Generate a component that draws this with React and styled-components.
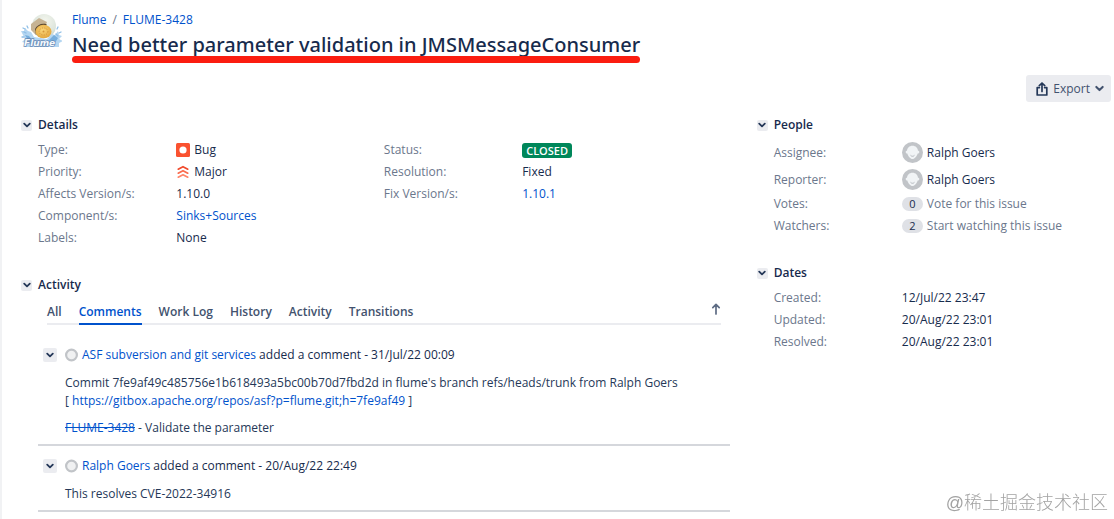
import React, { useState } from 'react';
import styled, { createGlobalStyle } from 'styled-components';

const GlobalStyle = createGlobalStyle`
  * {
    box-sizing: border-box;
  }

  body {
    margin: 0;
    background: #fff;
    color: #172b4d;
    font-family: 'Open Sans', 'Noto Sans', 'Noto Sans CJK SC', sans-serif;
    font-size: 12px;
    line-height: 18px;
  }

  button {
    font: inherit;
    cursor: pointer;
  }
`;

const Page = styled.div`
  min-height: 100vh;
  padding: 11px 3px 5px 19px;
  border-left: 2px solid #f1f2f4;
`;

const Header = styled.header`
  display: flex;
  gap: 10px;
`;

const Logo = styled.svg`
  width: 41px;
  height: 36px;
  margin-top: 2px;
`;

const Breadcrumbs = styled.nav`
  display: flex;
  gap: 6px;
  color: #6b778c;
`;

const Link = styled.a`
  color: #0052cc;
  text-decoration: ${(props) => (props.$resolved ? 'line-through' : 'none')};
`;

const Title = styled.h1`
  position: relative;
  width: fit-content;
  margin: 3px 0 0;
  font-family: 'Noto Sans', 'Open Sans', sans-serif;
  font-size: 20px;
  font-weight: 500;
  line-height: 26px;

  &::after {
    content: '';
    position: absolute;
    left: 0;
    right: 0;
    bottom: -5px;
    height: 7px;
    border-radius: 4px;
    background: #fb1d10;
  }
`;

const Toolbar = styled.div`
  display: flex;
  justify-content: flex-end;
  margin-top: 17px;
`;

const ExportButton = styled.button`
  display: flex;
  align-items: center;
  gap: 5px;
  height: 27px;
  padding: 0 7px 0 10px;
  border: 0;
  border-radius: 3px;
  background: #ebecf0;
  color: #42526e;
`;

const Columns = styled.div`
  display: grid;
  grid-template-columns: 2fr 1fr;
  gap: 27px;
  margin-top: 14px;
`;

const Module = styled.section`
  & + & {
    margin-top: 27px;
  }
`;

const ModuleHeader = styled.div`
  display: flex;
  align-items: center;
  gap: 6px;
`;

const ModuleTitle = styled.h2`
  margin: 0;
  font-size: 12px;
  font-weight: 600;
  line-height: 18px;
`;

const ModuleBody = styled.div`
  margin-left: 17px;
  padding-top: 5px;
`;

const Toggle = styled.button`
  display: flex;
  align-items: center;
  justify-content: center;
  width: ${(props) => props.$size}px;
  height: ${(props) => props.$size}px;
  padding: 0;
  border: 0;
  border-radius: 2px;
  background: #ebecf0;
  color: #253858;
`;

const TwoColumns = styled.div`
  display: grid;
  grid-template-columns: 1fr 1fr;
`;

const Fields = styled.dl`
  margin: 0;
`;

const Field = styled.div`
  display: grid;
  grid-template-columns: ${(props) => props.$label || '40%'} 1fr;
  align-items: center;
  height: ${(props) => (props.$tall ? 27 : 22)}px;
`;

const Label = styled.dt`
  color: #6b778c;
`;

const Value = styled.dd`
  display: flex;
  align-items: center;
  gap: 4px;
  margin: 0;
`;

const Status = styled.span`
  padding: 0 4px;
  border-radius: 3px;
  background: #00875a;
  color: #fff;
  font-size: 11px;
  font-weight: 600;
  line-height: 15px;
`;

const Badge = styled.span`
  min-width: 21px;
  border-radius: 8px;
  background: #dfe1e6;
  font-size: 11px;
  line-height: 14px;
  text-align: center;
`;

const ActionButton = styled.button`
  padding: 0;
  border: 0;
  background: none;
  color: #6b778c;
`;

const TabBar = styled.div`
  display: flex;
  justify-content: space-between;
  margin: 4px 9px 10px;
  border-bottom: 2px solid #ebecf0;
`;

const TabList = styled.div`
  display: flex;
  gap: 17px;
`;

const Tab = styled.button`
  margin-bottom: -2px;
  padding: 0 0 2px;
  border: 0;
  border-bottom: 2px solid ${(props) => (props.$active ? '#0052cc' : 'transparent')};
  background: none;
  color: ${(props) => (props.$active ? '#0052cc' : '#42526e')};
  font-weight: 600;
`;

const SortButton = styled.button`
  display: flex;
  width: 10px;
  padding: 0;
  border: 0;
  background: none;
  color: #5e6c84;
`;

const Comment = styled.article`
  padding: 11px 0 7px 5px;
  border-bottom: 2px solid #d5d7dc;
`;

const CommentHeader = styled.div`
  display: flex;
  align-items: center;
  gap: 8px;
`;

const Author = styled.div`
  display: flex;
  align-items: center;
  gap: 4px;
`;

const CommentBody = styled.div`
  padding: 1px 0 0 22px;
  color: #253858;

  p {
    margin: 9px 0 0;
  }
`;

const Watermark = styled.div`
  position: fixed;
  right: 6px;
  bottom: 4px;
  color: #a3a3a3;
  font-family: 'Liberation Sans', 'Noto Sans CJK SC', sans-serif;
  font-size: 18px;
  font-weight: 300;
  line-height: 24px;
`;

function Chevron({ size = 8 }) {
  return (
    <svg width={size} height={size} viewBox="0 0 8 8" fill="none" stroke="currentColor" strokeWidth="1.8" strokeLinecap="round" strokeLinejoin="round">
      <path d="M1.2 2.6 4 5.4l2.8-2.8" />
    </svg>
  );
}

function FlumeLogo() {
  return (
    <Logo viewBox="0 0 41 36" aria-hidden="true">
      <defs>
        <radialGradient id="globe" cx="0.55" cy="0.3" r="0.7">
          <stop offset="0" stopColor="#f4f6ee" />
          <stop offset="0.7" stopColor="#dde5dc" />
          <stop offset="1" stopColor="#bfd0cb" />
        </radialGradient>
        <radialGradient id="wheel" cx="0.45" cy="0.4" r="0.6">
          <stop offset="0" stopColor="#fbd77a" />
          <stop offset="1" stopColor="#e3a63c" />
        </radialGradient>
      </defs>
      <circle cx="23" cy="13" r="12" fill="url(#globe)" />
      <path d="M0 18l3 0 1-3 3 3 3 1 3 5 13 2 5-5 3 1 3-4 1 4 3 1-3 3 4 2-4 2 0 4H4l1-4-4-1 3-3z" fill="#b4d6f1" />
      <path d="M4 22l4 1 4 5 8 2 8-3 5-5 4 3-3 5-10 2H10z" fill="#76aedd" />
      <path d="M2 15l2 1M6 13l1 2M3 19l2 1M36 16l1-2M38 20l2-1M1 24h2M35 21l2 2" stroke="#8fbfe6" strokeWidth="1.3" strokeLinecap="round" />
      <path d="M10 11l8-6 8 4-2 5-8 4-1 4-5-5z" fill="#c6b394" />
      <path d="M14 16c2-4 6-6 11-5l1 1-6 3-5 7z" fill="#5d4a31" />
      <ellipse cx="22.5" cy="18.5" rx="8" ry="6.8" fill="url(#wheel)" />
      <ellipse cx="22.5" cy="18.5" rx="4.4" ry="3.6" fill="none" stroke="#d5953a" strokeDasharray="1.2 1.2" />
      <circle cx="22.5" cy="18.5" r="1" fill="#d5953a" />
      <text x="3" y="33" fill="#f4f8fc" stroke="#6688b3" strokeWidth="1.3" paintOrder="stroke" fontFamily="DejaVu Sans, sans-serif" fontSize="9" fontWeight="700" fontStyle="italic">
        Flume
      </text>
    </Logo>
  );
}

function Avatar() {
  return (
    <svg width="21" height="21" viewBox="0 0 21 21" aria-hidden="true">
      <circle cx="10.5" cy="10.5" r="10.5" fill="#c1c4c8" />
      <path d="M10.5 3.8c3.2 0 5.3 2.2 5.5 5 .9 0 1.4.6 1.3 1.4-.1.8-.7 1.3-1.6 1.4-.8 2.8-3.1 5.5-5.2 5.5s-4.4-2.7-5.2-5.5c-.9-.1-1.5-.6-1.6-1.4-.1-.8.4-1.4 1.3-1.4.2-2.8 2.3-5 5.5-5z" fill="#f1f4f6" />
      <path d="M8.8 13.6c.9 1 2.5 1 3.4 0" fill="none" stroke="#b3b8be" strokeLinecap="round" />
    </svg>
  );
}

function SmallAvatar() {
  return (
    <svg width="13" height="14" viewBox="0 0 13 14" aria-hidden="true">
      <circle cx="6.5" cy="7" r="5.4" fill="#f0f1f2" stroke="#c1c4c8" strokeWidth="2.2" />
    </svg>
  );
}

function BugIcon() {
  return (
    <svg width="14" height="14" viewBox="0 0 14 14" aria-hidden="true">
      <rect width="14" height="14" rx="1.5" fill="#fa5230" />
      <circle cx="7" cy="7" r="3.6" fill="#fff" />
    </svg>
  );
}

function MajorIcon() {
  return (
    <svg width="14" height="14" viewBox="0 0 14 14" fill="none" strokeWidth="1.7" strokeLinecap="round" strokeLinejoin="round" aria-hidden="true">
      <path d="M2.2 4.2 7 1.7l4.8 2.5" stroke="#f0492b" />
      <path d="M2.2 8.2 7 5.7l4.8 2.5" stroke="#fa6a4c" />
      <path d="M2.2 12.2 7 9.7l4.8 2.5" stroke="#ff8468" />
    </svg>
  );
}

function ExportIcon() {
  return (
    <svg width="12" height="14" viewBox="0 0 12 14" fill="none" stroke="#253858" strokeWidth="1.7" strokeLinecap="round" strokeLinejoin="round" aria-hidden="true">
      <path d="M3.4 5.6H1.2v7.4h9.6V5.6H8.6" />
      <path d="M6 9.4V1.2M3.3 3.6 6 1l2.7 2.6" />
    </svg>
  );
}

function Collapsible({ title, children }) {
  const [open, setOpen] = useState(true);

  return (
    <Module>
      <ModuleHeader>
        <Toggle $size={11} aria-label={`Toggle ${title}`} aria-expanded={open} onClick={() => setOpen(!open)}>
          <Chevron />
        </Toggle>
        <ModuleTitle>{title}</ModuleTitle>
      </ModuleHeader>
      {open && <ModuleBody>{children}</ModuleBody>}
    </Module>
  );
}

function Row({ label, tall, width, children }) {
  return (
    <Field $tall={tall} $label={width}>
      <Label>{label}:</Label>
      <Value>{children}</Value>
    </Field>
  );
}

function CommentItem({ author, date, children }) {
  const [open, setOpen] = useState(true);

  return (
    <Comment>
      <CommentHeader>
        <Toggle $size={14} aria-label="Toggle comment" aria-expanded={open} onClick={() => setOpen(!open)}>
          <Chevron />
        </Toggle>
        <Author>
          <SmallAvatar />
          <span>
            <Link href="#">{author}</Link> added a comment - {date}
          </span>
        </Author>
      </CommentHeader>
      {open && <CommentBody>{children}</CommentBody>}
    </Comment>
  );
}

const tabs = ['All', 'Comments', 'Work Log', 'History', 'Activity', 'Transitions'];

function App() {
  const [tab, setTab] = useState('Comments');

  return (
    <Page>
      <GlobalStyle />
      <Header>
        <FlumeLogo />
        <div>
          <Breadcrumbs aria-label="Breadcrumbs">
            <Link href="#">Flume</Link>
            <span>/</span>
            <Link href="#">FLUME-3428</Link>
          </Breadcrumbs>
          <Title>Need better parameter validation in JMSMessageConsumer</Title>
        </div>
      </Header>
      <Toolbar>
        <ExportButton>
          <ExportIcon />
          Export
          <Chevron size={9} />
        </ExportButton>
      </Toolbar>
      <Columns>
        <main>
          <Collapsible title="Details">
            <TwoColumns>
              <Fields>
                <Row label="Type"><BugIcon />Bug</Row>
                <Row label="Priority"><MajorIcon />Major</Row>
                <Row label="Affects Version/s">1.10.0</Row>
                <Row label="Component/s"><Link href="#">Sinks+Sources</Link></Row>
                <Row label="Labels">None</Row>
              </Fields>
              <Fields>
                <Row label="Status"><Status>CLOSED</Status></Row>
                <Row label="Resolution">Fixed</Row>
                <Row label="Fix Version/s"><Link href="#">1.10.1</Link></Row>
              </Fields>
            </TwoColumns>
          </Collapsible>
          <Collapsible title="Activity">
            <TabBar>
              <TabList role="tablist">
                {tabs.map((name) => (
                  <Tab key={name} role="tab" aria-selected={tab === name} $active={tab === name} onClick={() => setTab(name)}>
                    {name}
                  </Tab>
                ))}
              </TabList>
              <SortButton aria-label="Sort comments">
                <svg width="10" height="12" viewBox="0 0 10 12" fill="none" stroke="currentColor" strokeWidth="1.7" strokeLinecap="round" strokeLinejoin="round">
                  <path d="M5 11V1.4M1.8 4.6 5 1.4l3.2 3.2" />
                </svg>
              </SortButton>
            </TabBar>
            <CommentItem author="ASF subversion and git services" date="31/Jul/22 00:09">
              <p>
                Commit 7fe9af49c485756e1b618493a5bc00b70d7fbd2d in flume's branch refs/heads/trunk from Ralph Goers
                <br />
                [ <Link href="#">https://gitbox.apache.org/repos/asf?p=flume.git;h=7fe9af49</Link> ]
              </p>
              <p>
                <Link href="#" $resolved>FLUME-3428</Link> - Validate the parameter
              </p>
            </CommentItem>
            <CommentItem author="Ralph Goers" date="20/Aug/22 22:49">
              <p>This resolves CVE-2022-34916</p>
            </CommentItem>
          </Collapsible>
        </main>
        <aside>
          <Collapsible title="People">
            <Fields>
              <Row label="Assignee" width="38%" tall><Avatar />Ralph Goers</Row>
              <Row label="Reporter" width="38%" tall><Avatar />Ralph Goers</Row>
              <Row label="Votes" width="38%">
                <Badge>0</Badge>
                <ActionButton>Vote for this issue</ActionButton>
              </Row>
              <Row label="Watchers" width="38%">
                <Badge>2</Badge>
                <ActionButton>Start watching this issue</ActionButton>
              </Row>
            </Fields>
          </Collapsible>
          <Collapsible title="Dates">
            <Fields>
              <Row label="Created" width="38%">12/Jul/22 23:47</Row>
              <Row label="Updated" width="38%">20/Aug/22 23:01</Row>
              <Row label="Resolved" width="38%">20/Aug/22 23:01</Row>
            </Fields>
          </Collapsible>
        </aside>
      </Columns>
      <Watermark>@稀土掘金技术社区</Watermark>
    </Page>
  );
}

export default App;
